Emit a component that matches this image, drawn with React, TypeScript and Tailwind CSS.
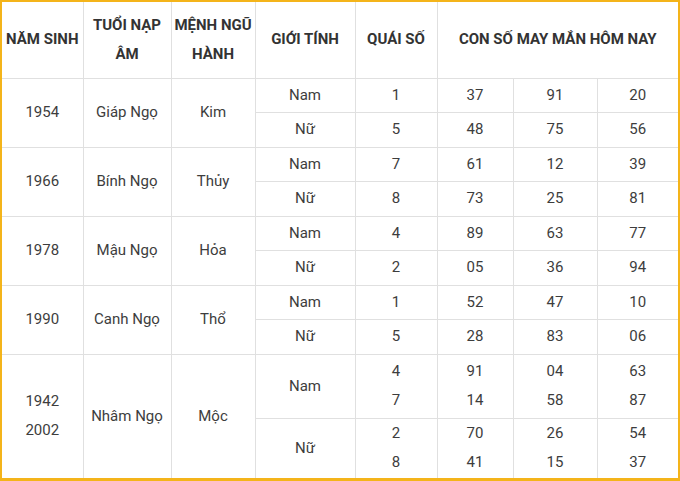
import React from 'react';

interface Group {
    years: string[];
    napAm: string;
    menh: string;
    rows: { gender: string; quai: string[]; nums: string[][] }[];
}

const groups: Group[] = [
    { years: ['1954'], napAm: 'Giáp Ngọ', menh: 'Kim', rows: [
        { gender: 'Nam', quai: ['1'], nums: [['37'], ['91'], ['20']] },
        { gender: 'Nữ', quai: ['5'], nums: [['48'], ['75'], ['56']] },
    ] },
    { years: ['1966'], napAm: 'Bính Ngọ', menh: 'Thủy', rows: [
        { gender: 'Nam', quai: ['7'], nums: [['61'], ['12'], ['39']] },
        { gender: 'Nữ', quai: ['8'], nums: [['73'], ['25'], ['81']] },
    ] },
    { years: ['1978'], napAm: 'Mậu Ngọ', menh: 'Hỏa', rows: [
        { gender: 'Nam', quai: ['4'], nums: [['89'], ['63'], ['77']] },
        { gender: 'Nữ', quai: ['2'], nums: [['05'], ['36'], ['94']] },
    ] },
    { years: ['1990'], napAm: 'Canh Ngọ', menh: 'Thổ', rows: [
        { gender: 'Nam', quai: ['1'], nums: [['52'], ['47'], ['10']] },
        { gender: 'Nữ', quai: ['5'], nums: [['28'], ['83'], ['06']] },
    ] },
    { years: ['1942', '2002'], napAm: 'Nhâm Ngọ', menh: 'Mộc', rows: [
        { gender: 'Nam', quai: ['4', '7'], nums: [['91', '14'], ['04', '58'], ['63', '87']] },
        { gender: 'Nữ', quai: ['2', '8'], nums: [['70', '41'], ['26', '15'], ['54', '37']] },
    ] },
];

const th = 'border border-[#e0e0e0] font-bold text-[15px] leading-[29px] text-[#333] text-center align-middle p-0 whitespace-nowrap';
const td = 'border border-[#e0e0e0] text-[15px] leading-[29px] text-[#3d3d3d] text-center align-middle p-0';

const Lines: React.FC<{ items: string[] }> = ({ items }) => (
    <>
        {items.map((t, i) => (
            <div key={i}>{t}</div>
        ))}
    </>
);

const App: React.FC = () => {
    return (
        <div className="w-[680px] h-[481px] bg-white border-2 border-b-[3px] border-[#f4b41a] overflow-hidden" style={{ fontFamily: 'Roboto, "Liberation Sans", sans-serif' }}>
            <table className="w-[676px] table-fixed border-collapse border-hidden">
                <colgroup>
                    <col className="w-[81px]" />
                    <col className="w-[88px]" />
                    <col className="w-[84px]" />
                    <col className="w-[100px]" />
                    <col className="w-[82px]" />
                    <col className="w-[76px]" />
                    <col className="w-[84px]" />
                    <col className="w-[81px]" />
                </colgroup>
                <thead>
                    <tr className="h-[76px]">
                        <th className={th}>NĂM SINH</th>
                        <th className={th}>TUỔI NẠP<br />ÂM</th>
                        <th className={th}>MỆNH NGŨ<br />HÀNH</th>
                        <th className={th}>GIỚI TÍNH</th>
                        <th className={th}>QUÁI SỐ</th>
                        <th className={th} colSpan={3}>CON SỐ MAY MẮN HÔM NAY</th>
                    </tr>
                </thead>
                <tbody>
                    {groups.map((g) =>
                        g.rows.map((r, ri) => {
                            const double = r.quai.length > 1;
                            const h = double ? (ri === 0 ? 'h-[64px]' : 'h-[60px]') : 'h-[34.5px]';
                            return (
                                <tr key={g.years[0] + r.gender} className={h}>
                                    {ri === 0 && (
                                        <>
                                            <td className={td} rowSpan={g.rows.length}><Lines items={g.years} /></td>
                                            <td className={td} rowSpan={g.rows.length}>{g.napAm}</td>
                                            <td className={td} rowSpan={g.rows.length}>{g.menh}</td>
                                        </>
                                    )}
                                    <td className={td}>{r.gender}</td>
                                    <td className={td}><Lines items={r.quai} /></td>
                                    {r.nums.map((n, ni) => (
                                        <td key={ni} className={td}><Lines items={n} /></td>
                                    ))}
                                </tr>
                            );
                        })
                    )}
                </tbody>
            </table>
        </div>
    );
};

export default App;
